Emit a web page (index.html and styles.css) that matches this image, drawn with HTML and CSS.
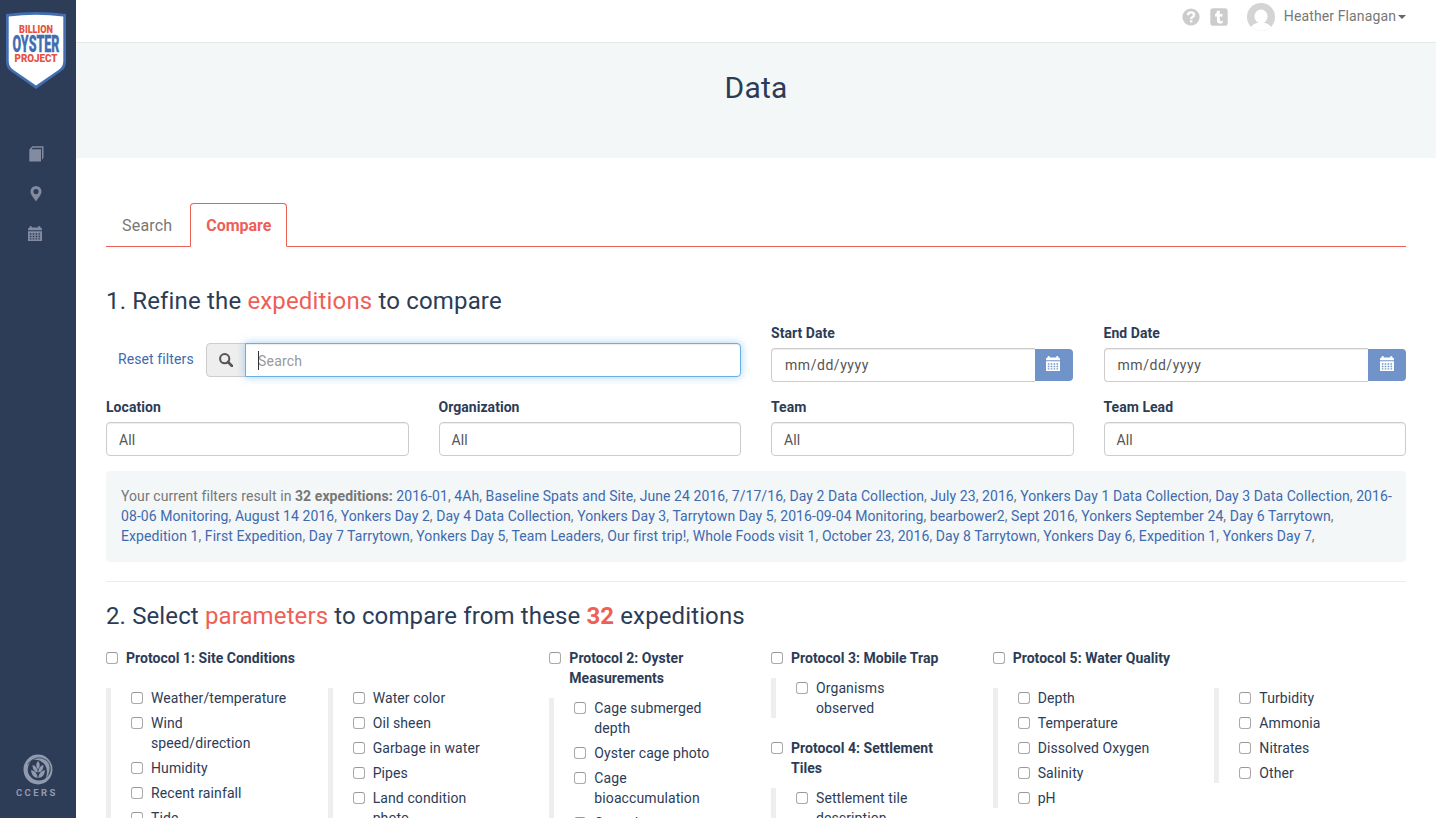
FILE: index.html
```html
<!DOCTYPE html>
<html lang="en">
<head>
<meta charset="utf-8">
<title>Data - Billion Oyster Project</title>
<link rel="stylesheet" href="styles.css">
</head>
<body>
<svg width="0" height="0" class="defs">
  <symbol id="calendar" viewBox="0 0 14 15">
    <path fill-rule="evenodd" d="M0 3.2Q0 1.4 1.6 1.4V.9Q1.6 0 2.7 0T3.8.9V1.4H10.2V.9Q10.2 0 11.3 0T12.4.9V1.4Q14 1.4 14 3.2V4.2H0ZM0 5.3H14V15H0ZM1.8 7.2V8.8H3.4V7.2ZM4.7 7.2V8.8H6.3V7.2ZM7.6 7.2V8.8H9.2V7.2ZM10.5 7.2V8.8H12.1V7.2ZM1.8 9.8V11.2H3.4V9.8ZM4.7 9.8V11.2H6.3V9.8ZM7.6 9.8V11.2H9.2V9.8ZM10.5 9.8V11.2H12.1V9.8ZM1.8 12.2V13.6H3.4V12.2ZM4.7 12.2V13.6H6.3V12.2ZM7.6 12.2V13.6H9.2V12.2ZM10.5 12.2V13.6H12.1V12.2Z"/>
  </symbol>
</svg>
<div class="app">
  <aside class="sidebar">
    <svg class="brand" viewBox="0 0 60 77">
      <path d="M0 2Q30-2 60 2V49Q60 57 54 60L30 77L6 60Q0 57 0 49Z" fill="#426eb1"/>
      <path d="M2.7 4.5Q30 1 57.3 4.500V49Q57.300 55 52.500 58L30 73.500L7.500 58Q2.700 55 2.700 49Z" fill="#fff"/>
      <g class="brand-text">
        <text class="red" x="13" y="20.500" font-size="11" textLength="34" lengthAdjust="spacingAndGlyphs">BILLION</text>
        <text class="blue" x="6.500" y="39.500" font-size="23.500" textLength="47" lengthAdjust="spacingAndGlyphs">OYSTER</text>
        <text class="red" x="8.500" y="49.800" font-size="11.500" textLength="43" lengthAdjust="spacingAndGlyphs">PROJECT</text>
      </g>
    </svg>
    <nav class="side-nav">
      <svg width="15" height="16" viewBox="0 0 15 16"><path d="M.3 3.600 3.300.3H14.500V12L13 13.500V1.700H3.800L2.500 3.200H12V15.500H.3Z"/></svg>
      <svg width="12" height="16" viewBox="0 0 12 16"><path fill-rule="evenodd" d="M6 0A5.500 5.500 0 0 1 11.500 5.500C11.500 9 8 12 6 15.500C4 12 .5 9 .5 5.500A5.500 5.500 0 0 1 6 0ZM6 3A2.600 2.600 0 1 0 6 8.200A2.600 2.600 0 1 0 6 3Z"/></svg>
      <svg class="side-cal" width="14" height="15"><use href="#calendar"/></svg>
    </nav>
    <div class="ccers">
      <svg width="30" height="31" viewBox="0 0 30 31">
        <path fill-rule="evenodd" d="M15 .5A14.500 15 0 1 0 15 30.500A14.500 15 0 1 0 15 .5ZM16 4A11.300 11.300 0 1 1 16 26.600A11.300 11.300 0 1 1 16 4Z"/>
        <path d="M6 7Q16-1 25 7Q30 16 22 26Q26 17 22 11Q16 3 6 7Z"/>
        <path class="groove" d="M4.500 10Q14-.5 24 6.500Q29.500 13 26 20"/>
        <path d="M15 7Q18.500 11 15 15.500Q11.500 11 15 7ZM9.500 11Q14.500 12 14.700 18.500Q9.500 17.500 9.500 11ZM20.500 11Q15.500 12 15.300 18.500Q20.500 17.500 20.500 11ZM8 16Q14 17 14.700 24Q8.500 23.500 8 16ZM22 16Q16 17 15.300 24Q21.500 23.500 22 16Z"/>
      </svg>
      <span>CCERS</span>
    </div>
  </aside>
  <div class="page">
    <header class="topbar">
      <svg class="help" width="18" height="18" viewBox="0 0 18 18"><circle cx="9" cy="9" r="8.600" fill="#ccc"/><path d="M6 7.200Q6 4.400 9 4.400T12 7Q12 8.300 10.500 9.100Q9.200 9.800 9.200 11" fill="none" stroke="#fff" stroke-width="2.300"/><rect x="8" y="12.200" width="2.400" height="2.200" fill="#fff"/></svg>
      <svg class="tumblr" width="18" height="18" viewBox="0 0 18 18"><rect x=".3" y=".3" width="17.400" height="17.400" rx="2.800" fill="#ccc"/><path d="M7 2.700H9.800V6H12.500V8.500H9.800V11.500Q9.800 13 11 13Q11.800 13 12.700 12.500V15Q11.700 15.600 10.300 15.600Q6.900 15.600 6.900 12.500V8.500H5V6.300Q6.800 5.600 7 2.700Z" fill="#fff"/></svg>
      <svg class="avatar" width="28" height="28" viewBox="0 0 28 28"><clipPath id="round"><circle cx="14" cy="14" r="14"/></clipPath><g clip-path="url(#round)"><path d="M0 0H28V28H0Z" fill="#d4d4d4"/><ellipse cx="14" cy="13.500" rx="6.500" ry="7" fill="#fff"/><path d="M2 28Q4 21.500 10 20H18Q24 21.500 26 28Z" fill="#fff"/></g></svg>
      <span class="user">Heather Flanagan</span><i class="caret"></i>
    </header>
    <section class="hero"><h1>Data</h1></section>
    <main class="content">
      <ul class="tabs"><li>Search</li><li class="active">Compare</li></ul>
      <h2 class="refine">1. Refine the <em>expeditions</em> to compare</h2>
      <form class="filters">
        <div class="search-row">
          <a class="reset">Reset filters</a>
          <div class="search-group">
            <span class="addon"><svg width="14" height="14" viewBox="0 0 14 14"><circle cx="5.700" cy="5.700" r="4.600" fill="none" stroke="#555" stroke-width="2"/><path d="M9 9L13 13" stroke="#555" stroke-width="2.600" stroke-linecap="round"/></svg></span>
            <div class="control focused"><i class="cursor"></i>Search</div>
          </div>
        </div>
        <div class="field date start"><label>Start Date</label><div class="date-group"><div class="control">mm/dd/yyyy</div><span class="date-btn"><svg width="14" height="15"><use href="#calendar"/></svg></span></div></div>
        <div class="field date"><label>End Date</label><div class="date-group"><div class="control">mm/dd/yyyy</div><span class="date-btn"><svg width="14" height="15"><use href="#calendar"/></svg></span></div></div>
        <div class="field"><label>Location</label><div class="control">All</div></div>
        <div class="field"><label>Organization</label><div class="control">All</div></div>
        <div class="field"><label>Team</label><div class="control">All</div></div>
        <div class="field"><label>Team Lead</label><div class="control">All</div></div>
      </form>
      <div class="well">Your current filters result in <b>32 expeditions:</b> <a>2016-01</a>, <a>4Ah</a>, <a>Baseline Spats and Site</a>, <a>June 24 2016</a>, <a>7/17/16</a>, <a>Day 2 Data Collection</a>, <a>July 23, 2016</a>, <a>Yonkers Day 1 Data Collection</a>, <a>Day 3 Data Collection</a>, <a>2016-<br>08-06 Monitoring</a>, <a>August 14 2016</a>, <a>Yonkers Day 2</a>, <a>Day 4 Data Collection</a>, <a>Yonkers Day 3</a>, <a>Tarrytown Day 5</a>, <a>2016-09-04 Monitoring</a>, <a>bearbower2</a>, <a>Sept 2016</a>, <a>Yonkers September 24</a>, <a>Day 6 Tarrytown</a>,<br><a>Expedition 1</a>, <a>First Expedition</a>, <a>Day 7 Tarrytown</a>, <a>Yonkers Day 5</a>, <a>Team Leaders</a>, <a>Our first trip!</a>, <a>Whole Foods visit 1</a>, <a>October 23, 2016</a>, <a>Day 8 Tarrytown</a>, <a>Yonkers Day 6</a>, <a>Expedition 1</a>, <a>Yonkers Day 7</a>,</div>
      <hr>
      <h2 class="select">2. Select <em>parameters</em> to compare from these <em><b>32</b></em> expeditions</h2>
      <div class="protocols">
        <section class="wide">
          <label class="check title"><input type="checkbox">Protocol 1: Site Conditions</label>
          <div class="pair">
            <div class="params">
              <label class="check"><input type="checkbox">Weather/temperature</label>
              <label class="check"><input type="checkbox">Wind<br>speed/direction</label>
              <label class="check"><input type="checkbox">Humidity</label>
              <label class="check"><input type="checkbox">Recent rainfall</label>
              <label class="check"><input type="checkbox">Tide</label>
            </div>
            <div class="params">
              <label class="check"><input type="checkbox">Water color</label>
              <label class="check"><input type="checkbox">Oil sheen</label>
              <label class="check"><input type="checkbox">Garbage in water</label>
              <label class="check"><input type="checkbox">Pipes</label>
              <label class="check"><input type="checkbox">Land condition<br>photo</label>
            </div>
          </div>
        </section>
        <section>
          <label class="check title"><input type="checkbox">Protocol 2: Oyster<br>Measurements</label>
          <div class="params">
            <label class="check"><input type="checkbox">Cage submerged<br>depth</label>
            <label class="check"><input type="checkbox">Oyster cage photo</label>
            <label class="check"><input type="checkbox">Cage<br>bioaccumulation</label>
            <label class="check"><input type="checkbox">Cage damage</label>
          </div>
        </section>
        <section>
          <label class="check title"><input type="checkbox">Protocol 3: Mobile Trap</label>
          <div class="params">
            <label class="check"><input type="checkbox">Organisms<br>observed</label>
          </div>
          <label class="check title next"><input type="checkbox">Protocol 4: Settlement<br>Tiles</label>
          <div class="params">
            <label class="check"><input type="checkbox">Settlement tile<br>description</label>
          </div>
        </section>
        <section class="wide">
          <label class="check title"><input type="checkbox">Protocol 5: Water Quality</label>
          <div class="pair">
            <div class="params">
              <label class="check"><input type="checkbox">Depth</label>
              <label class="check"><input type="checkbox">Temperature</label>
              <label class="check"><input type="checkbox">Dissolved Oxygen</label>
              <label class="check"><input type="checkbox">Salinity</label>
              <label class="check"><input type="checkbox">pH</label>
            </div>
            <div class="params">
              <label class="check"><input type="checkbox">Turbidity</label>
              <label class="check"><input type="checkbox">Ammonia</label>
              <label class="check"><input type="checkbox">Nitrates</label>
              <label class="check"><input type="checkbox">Other</label>
            </div>
          </div>
        </section>
      </div>
    </main>
  </div>
</div>
</body>
</html>
```
FILE: styles.css
```css
* { box-sizing: border-box; }
body { margin: 0; font: 14px/20px Roboto, "Liberation Sans", sans-serif; letter-spacing: .1px; color: #2d3c56; background: #fff; }
.defs { display: block; }
h1, h2, ul { margin: 0; padding: 0; font-weight: 400; }
em { font-style: normal; color: #ee5f57; }
a { color: #3f6aae; }
.app { display: flex; height: 818px; overflow: hidden; }

.sidebar { width: 76px; flex: none; background: #2d3c57; display: flex; flex-direction: column; }
.brand { width: 60px; height: 77px; margin: 12px 0 0 6px; }
.brand-text { font-weight: 900; letter-spacing: 0; }
.red { fill: #e9503f; }
.blue { fill: #426eb1; stroke: #426eb1; stroke-width: .3px; }
.side-nav { width: 72px; margin-top: 57px; display: flex; flex-direction: column; align-items: center; gap: 24px; fill: #838ba0; }
.side-cal { margin-right: 2px; }
.ccers { margin: auto 0 20px; width: 76px; display: flex; flex-direction: column; align-items: center; fill: #929bad; color: #929bad; }
.groove { fill: none; stroke: #2d3c57; stroke-width: .8px; }
.ccers span { width: 44px; font-size: 9.500px; line-height: 10px; font-weight: 700; letter-spacing: 2.400px; margin-top: 3px; }

.page { flex: 1; min-width: 0; }
.topbar { height: 43px; border-bottom: 1px solid #e5e7e8; display: flex; align-items: flex-start; justify-content: flex-end; padding-right: 30px; color: #777; }
.help { margin: 8px 10px 0 0; }
.tumblr { margin: 8px 19px 0 0; }
.avatar { margin: 3px 9px 0 0; }
.user { margin-top: 6px; letter-spacing: .12px; }
.caret { border: 4px solid transparent; border-top-color: #666; border-bottom: 0; margin: 15px 0 0 2px; }
.hero { height: 115px; background: #f3f7f8; text-align: center; padding-top: 27px; }
.hero h1 { font-size: 30px; line-height: 36px; letter-spacing: .2px; }

.content { padding: 45px 30px 0; }
.tabs { display: flex; list-style: none; height: 44px; border-bottom: 1px solid #ee5f57; font-size: 16px; line-height: 22px; letter-spacing: .2px; color: #777; }
.tabs li { height: 44px; padding: 11px 15px; border: 1px solid transparent; margin-right: 2px; }
.tabs .active { border-color: #ee5f57; border-bottom-color: #fff; border-radius: 4px 4px 0 0; color: #ee5f57; font-weight: 700; letter-spacing: -.06px; background: #fff; }
h2 { font-size: 24px; line-height: 28px; letter-spacing: .12px; }
.refine { margin: 40px 0 8px; letter-spacing: .16px; }

.filters { display: grid; grid-template-columns: repeat(4, minmax(0, 1fr)); column-gap: 30px; row-gap: 15px; }
.search-row { grid-column: span 2; display: flex; padding: 20px 0 0 12px; align-items: flex-start; }
.reset { width: 88px; padding-top: 6px; }
.search-group { flex: 1; display: flex; height: 34px; }
.addon { width: 40px; margin-right: -1px; border: 1px solid #ccc; border-radius: 4px 0 0 4px; background: #eee; display: grid; place-items: center; }
.control { height: 34px; flex: 1; padding: 7px 12px 5px; border: 1px solid #ccc; border-radius: 4px; color: #555; box-shadow: inset 0 1px 1px rgba(0,0,0,.075); background: #fff; }
.focused { border-color: #66afe9; border-radius: 0 4px 4px 0; color: #999; position: relative; letter-spacing: .2px; box-shadow: inset 0 1px 1px rgba(0,0,0,.075), 0 0 8px rgba(102,175,233,.6); }
.cursor { position: absolute; left: 12px; top: 7px; width: 1px; height: 19px; background: #333; }
.field label { display: block; font-weight: 700; letter-spacing: .04px; margin-bottom: 5px; }
.date-group { display: flex; align-items: center; }
.start .date-group { padding-right: 1px; }
.date .control { border-radius: 4px 0 0 4px; border-right: 0; padding: 6px 13px; letter-spacing: .55px; }
.date-btn { width: 38px; height: 32px; background: #7093c9; border-radius: 0 4px 4px 0; display: grid; place-items: center; fill: #fff; }
.date-btn svg { margin: -3px 1px 0 0; }

.well { height: 91px; margin-top: 15px; padding: 15px; background: #f3f7f8; border-radius: 4px; color: #777; letter-spacing: .075px; white-space: nowrap; }
hr { margin: 19px 0 20px; border: 0; border-top: 1px solid #eaecec; }
.protocols { display: grid; grid-template-columns: 2fr 1fr 1fr 2fr; margin: 18px -15px 0; }
.protocols > section { padding: 0 15px; min-width: 0; }
.check { display: block; position: relative; padding-left: 20px; margin-bottom: 5px; white-space: nowrap; }
.check:last-child { margin-bottom: 0; }
.check input { appearance: none; position: absolute; left: 0; top: 4px; width: 12px; height: 12px; margin: 0; border: 1px solid #aaa; border-top-color: #999; border-radius: 3px; background: #fff; }
.title { font-weight: 700; letter-spacing: .03px; margin-bottom: 10px; }
.next { margin-top: 20px; }
.params { border-left: 5px solid #eee; padding-left: 20px; }
.pair { display: grid; grid-template-columns: 1fr 1fr; column-gap: 30px; align-items: start; margin-top: 20px; }
```
